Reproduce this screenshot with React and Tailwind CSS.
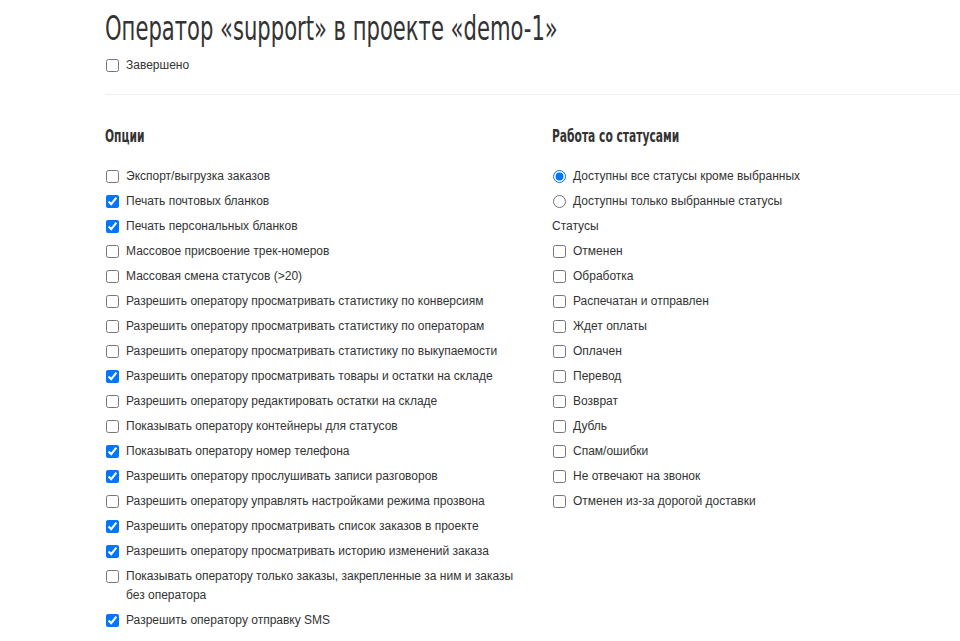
import React from 'react';

const options = [
  ['Экспорт/выгрузка заказов', false],
  ['Печать почтовых бланков', true],
  ['Печать персональных бланков', true],
  ['Массовое присвоение трек-номеров', false],
  ['Массовая смена статусов (>20)', false],
  ['Разрешить оператору просматривать статистику по конверсиям', false],
  ['Разрешить оператору просматривать статистику по операторам', false],
  ['Разрешить оператору просматривать статистику по выкупаемости', false],
  ['Разрешить оператору просматривать товары и остатки на складе', true],
  ['Разрешить оператору редактировать остатки на складе', false],
  ['Показывать оператору контейнеры для статусов', false],
  ['Показывать оператору номер телефона', true],
  ['Разрешить оператору прослушивать записи разговоров', true],
  ['Разрешить оператору управлять настройками режима прозвона', false],
  ['Разрешить оператору просматривать список заказов в проекте', true],
  ['Разрешить оператору просматривать историю изменений заказа', true],
  ['Показывать оператору только заказы, закрепленные за ним и заказы без оператора', false],
  ['Разрешить оператору отправку SMS', true],
];

const statuses = [
  'Отменен',
  'Обработка',
  'Распечатан и отправлен',
  'Ждет оплаты',
  'Оплачен',
  'Перевод',
  'Возврат',
  'Дубль',
  'Спам/ошибки',
  'Не отвечают на звонок',
  'Отменен из-за дорогой доставки',
];

const Check = ({ label, checked }) => (
  <label className="flex items-start gap-[7px] leading-[19px]">
    <input
      type="checkbox"
      defaultChecked={checked}
      className="m-0 mt-[3px] ml-px w-[13px] h-[13px] shrink-0 accent-[#0075ff]"
    />
    <span>{label}</span>
  </label>
);

const Radio = ({ label, checked }) => (
  <label className="flex items-start gap-[7px] leading-[19px]">
    <input
      type="radio"
      name="mode"
      defaultChecked={checked}
      className="m-0 mt-[3px] ml-px w-[13px] h-[13px] shrink-0 accent-[#0075ff]"
    />
    <span>{label}</span>
  </label>
);

const Heading = ({ children }) => (
  <h2 className="text-[17px] font-bold leading-[24px] font-['DejaVu_Sans_Condensed',sans-serif]">
    <span className="inline-block origin-left scale-x-[0.7] whitespace-nowrap">{children}</span>
  </h2>
);

export default function App() {
  return (
    <div className="bg-white min-h-screen overflow-hidden text-[#333] text-[12px] font-['Liberation_Sans',Arial,sans-serif]">
      <div className="pl-[105px] pt-[6px]">
        <h1 className="text-[34px] leading-[44px] text-[#333] font-['DejaVu_Sans_Condensed',sans-serif]">
          <span className="inline-block origin-left scale-x-[0.69] whitespace-nowrap">
            Оператор «support» в проекте «demo-1»
          </span>
        </h1>
        <div className="mt-[6px]">
          <Check label="Завершено" checked={false} />
        </div>
        <hr className="mt-[19px] border-0 border-t border-[#eee]" />

        <div className="flex mt-[29px]">
          <div className="w-[447px] shrink-0">
            <Heading>Опции</Heading>
            <div className="w-[415px] mt-[19px] flex flex-col gap-[6px]">
              {options.map(([l, c]) => (
                <Check key={l} label={l} checked={c} />
              ))}
            </div>
          </div>
          <div className="w-[380px] shrink-0">
            <Heading>Работа со статусами</Heading>
            <div className="mt-[19px] flex flex-col gap-[6px]">
              <Radio label="Доступны все статусы кроме выбранных" checked />
              <Radio label="Доступны только выбранные статусы" checked={false} />
              <div className="leading-[19px]">Статусы</div>
              {statuses.map((s) => (
                <Check key={s} label={s} checked={false} />
              ))}
            </div>
          </div>
        </div>
      </div>
    </div>
  );
}
